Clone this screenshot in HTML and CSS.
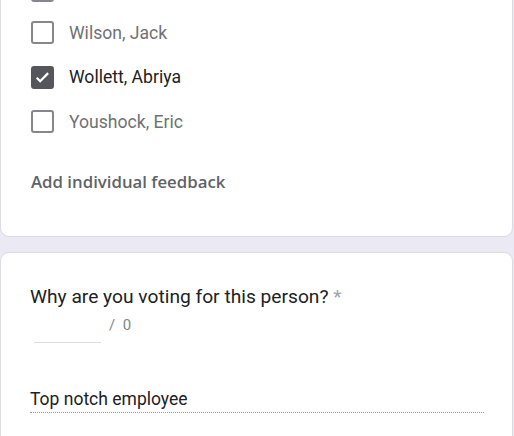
FILE: index.html
```html
<!DOCTYPE html>
<html>
<head>
<meta charset="utf-8">
<link rel="stylesheet" href="styles.css">
</head>
<body>
<div class="page">
  <section class="card card-options">
    <div class="opt opt-first"><span class="box"></span></div>
    <div class="opt"><span class="box"></span><span class="label">Wilson, Jack</span></div>
    <div class="opt checked"><span class="box"><svg viewBox="0 0 23 23" width="23" height="23"><path d="M4.5 11.8l4.2 4.2 9.6-9.8" fill="none" stroke="#fff" stroke-width="2.7"/></svg></span><span class="label">Wollett, Abriya</span></div>
    <div class="opt"><span class="box"></span><span class="label">Youshock, Eric</span></div>
    <div class="feedback">Add individual feedback</div>
  </section>
  <section class="card card-question">
    <div class="question">Why are you voting for this person? <span class="req">*</span></div>
    <div class="points"><span class="points-input"></span><span class="points-total">/&nbsp;&nbsp;0</span></div>
    <div class="answer">Top notch employee</div>
  </section>
</div>
</body>
</html>
```
FILE: styles.css
```css
html, body {
  margin: 0;
  padding: 0;
  background: #ebe9f4;
  overflow: hidden;
  height: 436px;
}
.page {
  font-family: Roboto, "Liberation Sans", sans-serif;
  display: flex;
  flex-direction: column;
  gap: 15px;
  margin-top: -30.25px;
}
.card {
  background: #fff;
  border: 1px solid #dadce0;
  border-radius: 9px;
  margin: 0 1px 0 0;
}
.card-options {
  padding: 0 30px 44px 30px;
}
.opt {
  display: flex;
  align-items: center;
  height: 44.5px;
}
.opt-first { height: 39.5px; }
.box {
  box-sizing: border-box;
  width: 23px;
  height: 23px;
  border: 2px solid #85878c;
  border-radius: 3px;
  flex: none;
  display: flex;
  align-items: center;
  justify-content: center;
}
.opt.checked .box {
  background: #55565c;
  border-color: #55565c;
}
.box svg { display: block; }
.label {
  margin-left: 15px;
  font-size: 17.6px;
  color: #6f7175;
}
.opt.checked .label { color: #202124; }
.feedback {
  margin-top: 28px;
  font-family: "Open Sans", Roboto, sans-serif;
  font-size: 16.8px;
  font-weight: 600;
  color: #5f6368;
  line-height: 20px;
}
.card-question {
  padding: 32px 29px 60px 29px;
  height: 200px;
}
.question {
  font-size: 19.2px;
  color: #202124;
  line-height: 24px;
}
.req { color: #a0a3a8; }
.points {
  display: flex;
  align-items: center;
  margin-top: 4px;
  margin-left: 4px;
  height: 24px;
}
.points-input {
  width: 67px;
  height: 22px;
  border-bottom: 1px solid #dadce0;
  margin-top: 14px;
}
.points-total {
  margin-left: 8px;
  font-size: 15px;
  color: #80868b;
}
.answer {
  margin-top: 52px;
  font-size: 17.5px;
  color: #202124;
  padding-bottom: 3px;
  border-bottom: 1px dotted #9aa0a6;
  width: 454px;
}
```
